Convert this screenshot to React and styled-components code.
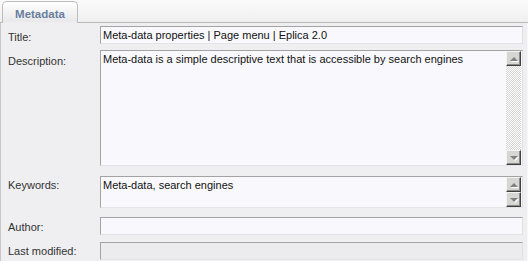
import React from "react";
import styled, { createGlobalStyle } from "styled-components";

const Global = createGlobalStyle`
  html, body { margin: 0; padding: 0; background: #ffffff; }
  body { font-family: "Liberation Sans", Arial, sans-serif; }
`;

const Frame = styled.div`
  width: 528px;
  height: 261px;
  overflow: hidden;
  display: flex;
  flex-direction: column;
`;

const TabBar = styled.div`
  height: 23px;
  box-sizing: border-box;
  display: flex;
  align-items: flex-end;
  padding-left: 2px;
  border-bottom: 1px solid #b9b9b9;
  background: linear-gradient(#fbfbfb, #efefef);
`;

const Tab = styled.div`
  width: 76px;
  height: 22px;
  box-sizing: border-box;
  margin-bottom: -1px;
  border: 1px solid #bcbcbc;
  border-bottom: none;
  border-radius: 5px 5px 0 0;
  background: linear-gradient(#ffffff, #e9e9eb 90%, #efeff1);
  color: #6a7f9c;
  font-weight: bold;
  font-size: 11.5px;
  display: flex;
  align-items: center;
  justify-content: center;
  padding-top: 2px;
`;

const Panel = styled.div`
  flex: 1;
  background: #efeff1;
  border-left: 1px solid #c8c8c8;
  border-right: 1px solid #f8f8f8;
  padding: 3px 4px 0 7px;
  display: grid;
  grid-template-columns: 92px 423px;
  align-content: start;
`;

const Label = styled.label`
  font-size: 11px;
  color: #333333;
  padding-top: ${(p) => p.$pt ?? 5}px;
  margin-top: ${(p) => p.$mt ?? 0}px;
  line-height: 13px;
`;

const Input = styled.input`
  box-sizing: border-box;
  width: 100%;
  height: 18px;
  margin: ${(p) => p.$mt ?? 0}px 0 0 0;
  padding: 0 2px;
  font-family: "Liberation Sans", Arial, sans-serif;
  font-size: 11px;
  color: #111111;
  background: ${(p) => (p.disabled ? "#ececee" : "#f9f9fd")};
  border: 1px solid;
  border-color: #a3a3a3 #e0e0e4 #e4e4e8 #a3a3a3;
  outline: none;
`;

const AreaBox = styled.div`
  box-sizing: border-box;
  height: ${(p) => p.$h}px;
  margin-top: ${(p) => p.$mt ?? 0}px;
  display: flex;
  background: #f9f9fd;
  border: 1px solid;
  border-color: #a3a3a3 #e0e0e4 #e4e4e8 #a3a3a3;
`;

const Area = styled.textarea`
  flex: 1;
  resize: none;
  overflow: hidden;
  border: none;
  outline: none;
  background: transparent;
  margin: 0;
  padding: 2px 2px;
  font-family: "Liberation Sans", Arial, sans-serif;
  font-size: 11px;
  line-height: 13px;
  color: #111111;
`;

const Scrollbar = styled.div`
  width: 15px;
  margin: 0 1px 0 0;
  display: flex;
  flex-direction: column;
`;

const Track = styled.div`
  flex: 1;
  background: repeating-conic-gradient(#d4d4d0 0 25%, #ffffff 0 50%) 0 0 / 2px 2px;
`;

const ArrowBtn = styled.div`
  width: 15px;
  height: 15px;
  box-sizing: border-box;
  background: #d6d6d2;
  border: 1px solid;
  border-color: #f4f4f4 #404040 #404040 #f4f4f4;
  box-shadow: inset -1px -1px 0 #8a8a8a;
  display: flex;
  align-items: center;
  justify-content: center;
  &::after {
    content: "";
    width: 0;
    height: 0;
    border-left: 4px solid transparent;
    border-right: 4px solid transparent;
    ${(p) =>
      p.$dir === "up"
        ? "border-bottom: 4px solid #808080; margin-top: 1px;"
        : "border-top: 4px solid #808080; margin-top: 1px;"}
    filter: drop-shadow(1px 1px 0 #ffffff);
  }
`;

export default function App() {
  return (
    <>
      <Global />
      <Frame>
        <TabBar>
          <Tab>Metadata</Tab>
        </TabBar>
        <Panel>
          <Label $pt={5}>Title:</Label>
          <Input defaultValue="Meta-data properties | Page menu | Eplica 2.0" />

          <Label $mt={6} $pt={5}>Description:</Label>
          <AreaBox $h={116} $mt={6}>
            <Area defaultValue="Meta-data is a simple descriptive text that is accessible by search engines" />
            <Scrollbar>
              <ArrowBtn $dir="up" />
              <Track />
              <ArrowBtn $dir="down" />
            </Scrollbar>
          </AreaBox>

          <Label $mt={10} $pt={3}>Keywords:</Label>
          <AreaBox $h={32} $mt={10}>
            <Area defaultValue="Meta-data, search engines" />
            <Scrollbar>
              <ArrowBtn $dir="up" />
              <ArrowBtn $dir="down" />
            </Scrollbar>
          </AreaBox>

          <Label $mt={9} $pt={4}>Author:</Label>
          <Input $mt={9} />

          <Label $mt={7} $pt={3}>Last modified:</Label>
          <Input $mt={7} disabled />
        </Panel>
      </Frame>
    </>
  );
}
